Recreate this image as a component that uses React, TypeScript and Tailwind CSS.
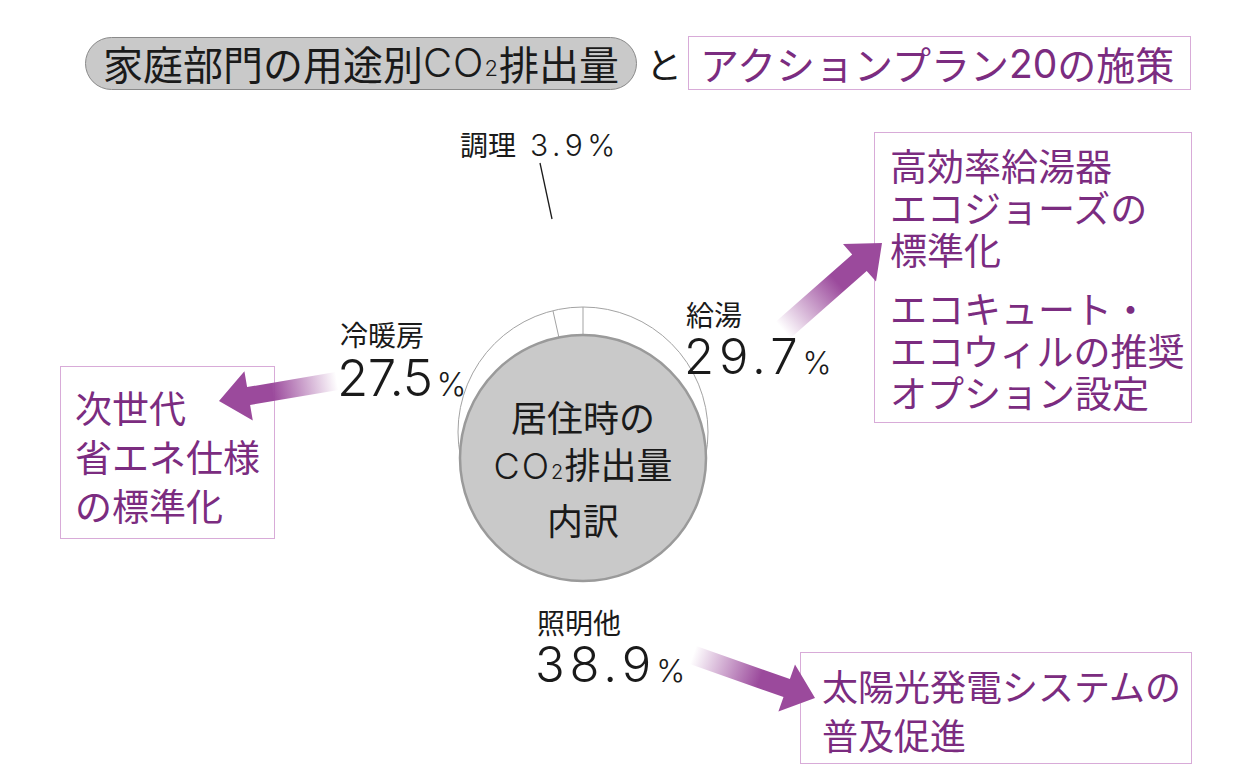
import React from "react";

type Pt = [number, number];

function arrowPoints(T: Pt, P: Pt, w: number, hl: number, hw: number) {
  const dx = P[0] - T[0];
  const dy = P[1] - T[1];
  const L = Math.hypot(dx, dy);
  const d: Pt = [dx / L, dy / L];
  const n: Pt = [-d[1], d[0]];
  const B: Pt = [P[0] - d[0] * hl, P[1] - d[1] * hl];
  const pts: Pt[] = [
    [T[0] + n[0] * w / 2, T[1] + n[1] * w / 2],
    [B[0] + n[0] * w / 2, B[1] + n[1] * w / 2],
    [B[0] + n[0] * hw, B[1] + n[1] * hw],
    P,
    [B[0] - n[0] * hw, B[1] - n[1] * hw],
    [B[0] - n[0] * w / 2, B[1] - n[1] * w / 2],
    [T[0] - n[0] * w / 2, T[1] - n[1] * w / 2],
  ];
  return pts.map((p) => `${p[0].toFixed(1)},${p[1].toFixed(1)}`).join(" ");
}

function Arrow({ id, T, P, w }: { id: string; T: Pt; P: Pt; w: number }) {
  const pts = arrowPoints(T, P, w, 30, 25);
  const mx = T[0] + (P[0] - T[0]) * 0.55;
  const my = T[1] + (P[1] - T[1]) * 0.55;
  return (
    <g>
      <defs>
        <linearGradient id={id} gradientUnits="userSpaceOnUse" x1={T[0]} y1={T[1]} x2={mx} y2={my}>
          <stop offset="0" stopColor="#9b4a9c" stopOpacity="0" />
          <stop offset="1" stopColor="#9b4a9c" stopOpacity="1" />
        </linearGradient>
      </defs>
      <polygon points={pts} fill={`url(#${id})`} />
    </g>
  );
}

const NUM = "font-['Inter','Noto_Sans_CJK_JP',sans-serif] font-light";
const LAT = "font-['Inter','Noto_Sans_CJK_JP',sans-serif] font-light";

export default function App() {
  return (
    <div className="relative w-[1244px] h-[784px] bg-white overflow-hidden font-['Noto_Sans_CJK_JP',sans-serif] text-[#1a1a1a]">
      {/* Title row */}
      <div className="flex items-center pt-[36px] pl-[85px]">
        <div className="flex h-[53px] w-[552px] items-center justify-center rounded-full border border-[#8a8a8a] bg-[#c9c9c9] text-[40px] leading-none">
          <span>家庭部門の用途別</span>
          <span className={`${LAT} tracking-[1px]`}>CO</span>
          <span className={`${LAT} text-[22px] self-end mb-[10px] mr-[1px]`}>2</span>
          <span>排出量</span>
        </div>
        <div className="ml-[9px] mr-[6px] text-[36px] leading-none">と</div>
        <div className="flex h-[54px] w-[503px] items-center border border-[#d8abd8] pl-[11px] text-[39px] leading-none text-[#7b2c80]">
          <span>アクションプラン</span>
          <span className={`${LAT} font-normal`}>20</span>
          <span>の施策</span>
        </div>
      </div>

      {/* Boxes */}
      <div className="absolute left-[874px] top-[132px] h-[291px] w-[318px] border border-[#d8abd8] pl-[15px] pt-[11px] text-[37px] leading-[42px] text-[#7b2c80]">
        <div>高効率給湯器</div>
        <div>エコジョーズの</div>
        <div>標準化</div>
        <div className="mt-[17px]">エコキュート・</div>
        <div>エコウィルの推奨</div>
        <div>オプション設定</div>
      </div>

      <div className="absolute left-[60px] top-[366px] h-[173px] w-[215px] border border-[#d8abd8] pl-[14px] pt-[16px] text-[37px] leading-[49px] text-[#7b2c80]">
        <div>次世代</div>
        <div>省エネ仕様</div>
        <div>の標準化</div>
      </div>

      <div className="absolute left-[800px] top-[652px] h-[112px] w-[392px] border border-[#d8abd8] pl-[21px] pt-[8px] text-[36px] leading-[49px] text-[#7b2c80]">
        <div>太陽光発電システムの</div>
        <div>普及促進</div>
      </div>

      {/* Chart + arrows */}
      <svg className="absolute left-0 top-0 pointer-events-none" width="1244" height="784" viewBox="0 0 1244 784">
        <circle cx="583" cy="432" r="125" fill="white" stroke="#a3a3a3" strokeWidth="1" />
        <line x1="583" y1="307" x2="583" y2="340" stroke="#a3a3a3" strokeWidth="1" />
        <line x1="553" y1="311" x2="559.5" y2="340" stroke="#a3a3a3" strokeWidth="1" />
        <circle cx="583" cy="458" r="123" fill="#c9c9c9" stroke="#9a9a9a" strokeWidth="2.5" />
        <line x1="540" y1="163" x2="552" y2="219" stroke="#1a1a1a" strokeWidth="1.3" />
        <Arrow id="ga" T={[783, 330]} P={[882, 243]} w={22} />
        <Arrow id="gb" T={[337, 381]} P={[219, 401]} w={18} />
        <Arrow id="gc" T={[693, 655]} P={[815, 698]} w={19} />
      </svg>

      {/* Center text */}
      <div className="absolute left-[463px] top-[393px] w-[240px] text-center text-[36px] leading-[47px]">
        <div>居住時の</div>
        <div className="flex items-baseline justify-center">
          <span className={`${LAT} tracking-[2px]`}>CO</span>
          <span className={`${LAT} text-[20px] mr-[1px]`}>2</span>
          <span>排出量</span>
        </div>
        <div>内訳</div>
      </div>

      {/* Labels */}
      <div className="absolute left-[460px] top-[129px] flex items-baseline text-[28px] leading-[30px]">
        <span>調理</span>
        <span className={`${NUM} ml-[14px] text-[30px] tracking-[0.15em]`}>3.9%</span>
      </div>

      <div className="absolute left-[340px] top-[319px] flex flex-col">
        <div className="text-[28px] leading-[30px]">冷暖房</div>
        <div className={`${NUM} mt-[4px] text-[51px] leading-[50px] -ml-[3px] tracking-[-0.5px]`}>
          27.5<span className="ml-[4px] text-[32px] tracking-normal">%</span>
        </div>
      </div>

      <div className="absolute left-[686px] top-[299px] flex flex-col">
        <div className="text-[28px] leading-[30px]">給湯</div>
        <div className={`${NUM} mt-[3px] text-[49px] leading-[50px] tracking-[0.1em] -ml-[2px]`}>
          29.7<span className="text-[31px] tracking-normal">%</span>
        </div>
      </div>

      <div className="absolute left-[537px] top-[607px] flex flex-col">
        <div className="text-[28px] leading-[30px]">照明他</div>
        <div className={`${NUM} mt-[3px] text-[49px] leading-[50px] tracking-[0.1em] -ml-[2px]`}>
          38.9<span className="text-[31px] tracking-normal">%</span>
        </div>
      </div>
    </div>
  );
}
